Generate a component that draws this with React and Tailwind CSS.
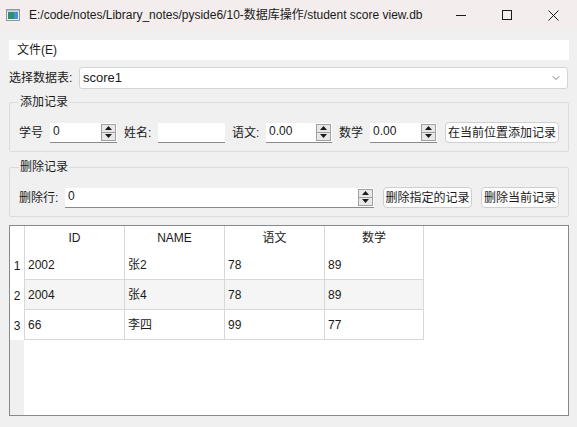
import { ChevronDown } from "lucide-react";

const font = { fontFamily: '"Liberation Sans", "Noto Sans CJK SC", sans-serif' };

function SpinButtons() {
  return (
    <div className="flex flex-col w-[15px] h-[17px] border border-[#a0a0a0] bg-[#e8e8e8] shrink-0">
      <div className="flex-1 flex items-center justify-center border-b border-[#a0a0a0]">
        <svg width="7" height="4" viewBox="0 0 7 4">
          <path d="M0 4 L3.5 0 L7 4 Z" fill="#1a1a1a" />
        </svg>
      </div>
      <div className="flex-1 flex items-center justify-center">
        <svg width="7" height="4" viewBox="0 0 7 4">
          <path d="M0 0 L3.5 4 L7 0 Z" fill="#1a1a1a" />
        </svg>
      </div>
    </div>
  );
}

function SpinBox({ value, width }) {
  return (
    <div
      className={`${width} h-[20px] bg-white border-b border-[#8a8a8a] flex items-center pl-[3px] pr-[1px] shrink-0`}
    >
      <span className="flex-1 text-[12px] leading-none pb-[3px]">{value}</span>
      <SpinButtons />
    </div>
  );
}

function Button({ children, width }) {
  return (
    <div
      className={`${width} h-[21px] bg-[#fdfdfd] border border-[#cfcfcf] rounded-[4px] flex items-center justify-center text-[12px] shrink-0`}
    >
      {children}
    </div>
  );
}

function GroupBox({ title, children }) {
  return (
    <div className="relative h-[50px] border border-[#dcdcdc] rounded-[2px] pt-[19px] pl-[9px]">
      <span className="absolute left-[9px] top-[-8px] px-[1px] bg-[#f0f0f0] text-[12px] leading-[14px]">
        {title}
      </span>
      {children}
    </div>
  );
}

const rows = [
  ["1", "2002", "张2", "78", "89"],
  ["2", "2004", "张4", "78", "89"],
  ["3", "66", "李四", "99", "77"],
];

export default function App() {
  return (
    <div className="w-[577px] h-[427px] bg-[#f0f0f0] text-[#1a1a1a] overflow-hidden" style={font}>
      {/* Title bar */}
      <div className="h-[30px] bg-[#f3eded] flex items-center">
        <svg width="14" height="12" viewBox="0 0 14 12" className="ml-[6px]">
          <rect x="0.5" y="0.5" width="13" height="11" fill="#e8eef2" stroke="#8c9aa6" />
          <rect x="2" y="3" width="6" height="7" fill="#2f8f6f" />
          <rect x="8" y="3" width="4" height="7" fill="#4b8fd6" />
          <rect x="1" y="1" width="12" height="1.5" fill="#b8c4ce" />
        </svg>
        <span className="ml-[9px] text-[12px] whitespace-nowrap">
          E:/code/notes/Library_notes/pyside6/10-数据库操作/student score view.db
        </span>
        <div className="ml-auto flex items-center h-full">
          <div className="w-[46px] h-full flex items-center justify-center">
            <div className="w-[10px] h-px bg-[#1a1a1a]" />
          </div>
          <div className="w-[46px] h-full flex items-center justify-center">
            <div className="w-[10px] h-[10px] border border-[#1a1a1a]" />
          </div>
          <div className="w-[46px] h-full flex items-center justify-center mr-[1px]">
            <svg width="11" height="11" viewBox="0 0 11 11">
              <path d="M0.5 0.5 L10.5 10.5 M10.5 0.5 L0.5 10.5" stroke="#1a1a1a" strokeWidth="1" />
            </svg>
          </div>
        </div>
      </div>

      <div className="px-[9px] pr-[8px]">
        {/* Menu bar */}
        <div className="mt-[10px] h-[20px] bg-white flex items-center">
          <span className="ml-[8px] text-[12px]">文件(E)</span>
        </div>

        {/* Table selector */}
        <div className="mt-[7px] h-[22px] flex items-center">
          <span className="w-[70px] text-[12px]">选择数据表:</span>
          <div className="flex-1 h-[22px] bg-white border border-[#d4d4d4] rounded-[3px] flex items-center pl-[3px] pr-[5px]">
            <span className="flex-1 text-[13px]">score1</span>
            <ChevronDown size={12} strokeWidth={1.4} color="#444" />
          </div>
          <div className="w-[1px]" />
        </div>

        {/* Add record */}
        <div className="mt-[13px]">
          <GroupBox title="添加记录">
            <div className="flex items-center h-[21px] text-[12px]">
              <span className="w-[31px]">学号</span>
              <SpinBox value="0" width="w-[67px]" />
              <span className="w-[34px] ml-[7px]">姓名:</span>
              <div className="w-[67px] h-[20px] bg-white border-b border-[#8a8a8a] shrink-0" />
              <span className="w-[34px] ml-[7px]">语文:</span>
              <SpinBox value="0.00" width="w-[66px]" />
              <span className="w-[31px] ml-[7px]">数学</span>
              <SpinBox value="0.00" width="w-[67px]" />
              <div className="ml-[8px]">
                <Button width="w-[114px]">在当前位置添加记录</Button>
              </div>
            </div>
          </GroupBox>
        </div>

        {/* Delete record */}
        <div className="mt-[15px]">
          <GroupBox title="删除记录">
            <div className="flex items-center h-[21px] text-[12px]">
              <span className="w-[46px]">删除行:</span>
              <SpinBox value="0" width="w-[309px]" />
              <div className="ml-[9px]">
                <Button width="w-[89px]">删除指定的记录</Button>
              </div>
              <div className="ml-[9px]">
                <Button width="w-[78px]">删除当前记录</Button>
              </div>
            </div>
          </GroupBox>
        </div>

        {/* Table */}
        <div className="mt-[8px] h-[191px] border border-[#868a8e] bg-white flex text-[12px]">
          <div className="w-[14px] bg-[#f0f0f0] flex flex-col">
            <div className="h-[24px] bg-white" />
            {rows.map((r) => (
              <div key={r[0]} className="h-[30px] bg-white flex items-center justify-center pt-[2px] text-[#1a1a1a]">
                {r[0]}
              </div>
            ))}
          </div>
          <div className="flex-1 flex flex-col">
            <div className="h-[24px] flex">
              {["ID", "NAME", "语文", "数学"].map((h) => (
                <div
                  key={h}
                  className="w-[100px] border-l border-[#d8d8d8] flex items-center justify-center last:border-r"
                >
                  {h}
                </div>
              ))}
            </div>
            {rows.map((r, i) => (
              <div key={r[0]} className="h-[30px] flex">
                {r.slice(1).map((c, j) => (
                  <div
                    key={j}
                    className={`w-[100px] border-l border-b border-[#d8d8d8] flex items-center pl-[3px] last:border-r ${
                      i === 1 ? "bg-[#f5f5f5]" : "bg-white"
                    }`}
                  >
                    {c}
                  </div>
                ))}
              </div>
            ))}
          </div>
        </div>
      </div>
    </div>
  );
}
